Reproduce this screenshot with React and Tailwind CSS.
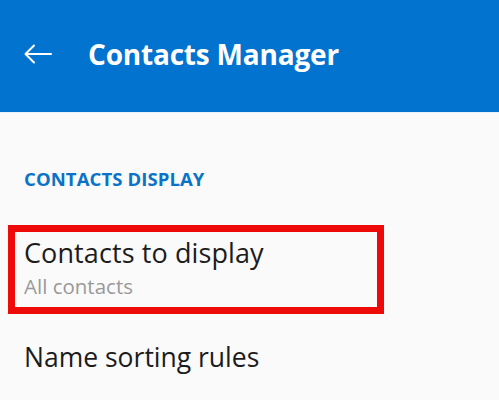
export default function App() {
  return (
    <div className="w-[499px] h-[400px] overflow-hidden bg-[#fafafa]" style={{ fontFamily: '"Open Sans", "Noto Sans", sans-serif' }}>
      {/* Top bar */}
      <div className="h-[112px] bg-[#0273cf] flex items-center">
        <svg className="ml-[24px] mt-[-4px]" width="28" height="20" viewBox="0 0 28 20" fill="none" stroke="white" strokeWidth="2" strokeLinecap="round" strokeLinejoin="round">
          <path d="M27 10H2" />
          <path d="M10 1.5L1.5 10L10 18.5" />
        </svg>
        <div className="ml-[36px] mt-[-4px] text-white font-bold text-[28px] tracking-[-0.2px]">Contacts Manager</div>
      </div>

      <div className="h-[1px] bg-[#e8f4fb]" />

      {/* Section */}
      <div className="pt-[54px] pl-[24px] text-[#0a73c8] font-bold text-[18.5px] leading-[24px] tracking-[0.1px]">CONTACTS DISPLAY</div>

      <div className="mt-[34px] ml-[8px] w-[376px] h-[89px] border-[7px] border-[#ef0a0a] pl-[9px] pt-[3px]">
        <div className="text-[#1c1c1c] text-[27px] leading-[36px] tracking-[0.1px]">Contacts to display</div>
        <div className="text-[#999999] text-[20.5px] leading-[26px] mt-[2px]">All contacts</div>
      </div>

      <div className="mt-[25px] pl-[24px] text-[#1c1c1c] text-[26.5px] leading-[36px]">Name sorting rules</div>
    </div>
  );
}
